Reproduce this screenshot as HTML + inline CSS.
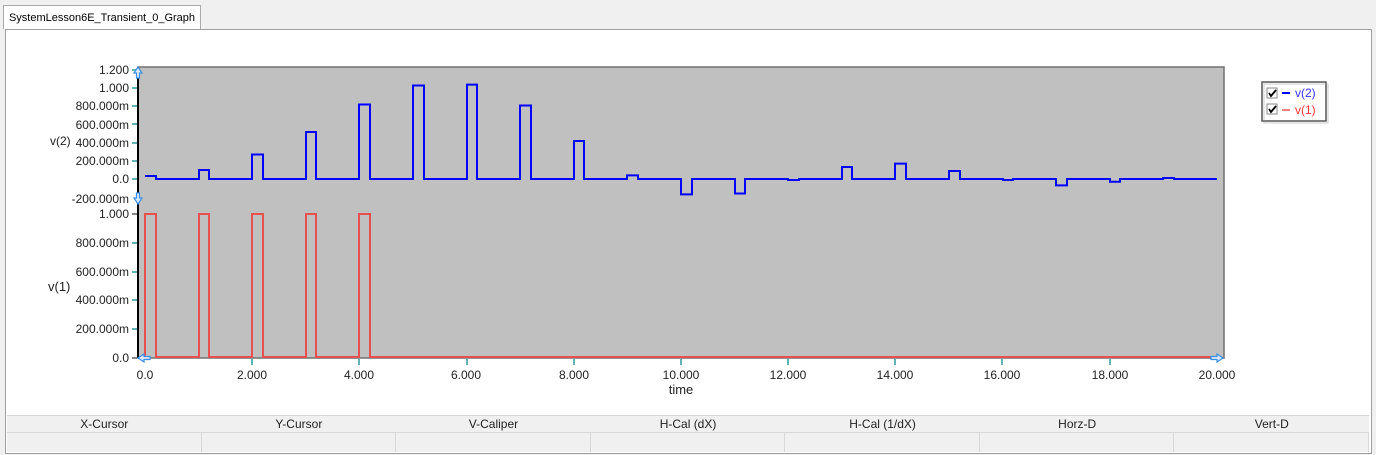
<!DOCTYPE html>
<html><head><meta charset="utf-8"><style>
body{margin:0;width:1376px;height:455px;background:#f0f0f0;font-family:"Liberation Sans",sans-serif;overflow:hidden;position:relative}
.tab{position:absolute;left:3px;top:5px;width:196px;height:23px;background:#fff;border:1px solid #aaa;border-bottom:none;font-size:11px;line-height:24px;text-align:center;color:#000;white-space:nowrap}
.panel{position:absolute;left:5px;top:29px;width:1365px;height:423px;background:#fff;border:1px solid #a0a0a0}
.tbl{position:absolute;left:7px;top:415px;width:1362px;background:#f0f0f0}
.row{display:flex;height:16px;font-size:12px;line-height:16px;border-top:1px solid #d8d8d8}
.row div{flex:1;text-align:center;color:#222}
.row2{display:flex;height:19px;border-top:1px solid #d8d8d8}
.row2 div{flex:1;border-right:1px solid #d8d8d8}
</style></head><body>
<div class="tab">SystemLesson6E_Transient_0_Graph</div>
<div class="panel"></div>
<svg style="position:absolute;left:0;top:0" width="1376" height="455" font-family="Liberation Sans, sans-serif" font-size="12">
<rect x="138" y="67" width="1086" height="291" fill="#c0c0c0" stroke="#707070" stroke-width="1.5"/>
<line x1="138" y1="67" x2="138" y2="358" stroke="#000" stroke-width="2"/>
<g stroke="#5fb3b3" stroke-width="2">
<line x1="132" y1="70" x2="137" y2="70"/><line x1="132" y1="88" x2="137" y2="88"/><line x1="132" y1="106" x2="137" y2="106"/><line x1="132" y1="124" x2="137" y2="124"/><line x1="132" y1="143" x2="137" y2="143"/><line x1="132" y1="161" x2="137" y2="161"/><line x1="132" y1="179" x2="137" y2="179"/>
<line x1="132" y1="243" x2="137" y2="243"/><line x1="132" y1="272" x2="137" y2="272"/><line x1="132" y1="300" x2="137" y2="300"/><line x1="132" y1="329" x2="137" y2="329"/>
<line x1="252" y1="359" x2="252" y2="365"/><line x1="359" y1="359" x2="359" y2="365"/><line x1="467" y1="359" x2="467" y2="365"/><line x1="574" y1="359" x2="574" y2="365"/><line x1="681" y1="359" x2="681" y2="365"/><line x1="788" y1="359" x2="788" y2="365"/><line x1="895" y1="359" x2="895" y2="365"/><line x1="1002" y1="359" x2="1002" y2="365"/><line x1="1110" y1="359" x2="1110" y2="365"/>
</g>
<g stroke="#888" stroke-width="2"><line x1="132" y1="214" x2="137" y2="214"/><line x1="132" y1="358" x2="137" y2="358"/></g>
<g fill="#222" text-anchor="end">
<text x="129" y="74">1.200</text><text x="129" y="92">1.000</text><text x="129" y="110">800.000m</text><text x="129" y="129">600.000m</text><text x="129" y="147">400.000m</text><text x="129" y="165">200.000m</text><text x="129" y="183">0.0</text><text x="129" y="203">-200.000m</text>
<text x="129" y="218">1.000</text><text x="129" y="247">800.000m</text><text x="129" y="276">600.000m</text><text x="129" y="304">400.000m</text><text x="129" y="333">200.000m</text><text x="129" y="362">0.0</text>
</g>
<text x="50" y="145" fill="#222">v(2)</text>
<text x="48" y="291" fill="#222" font-size="13">v(1)</text>
<g fill="#222" text-anchor="middle">
<text x="145" y="379">0.0</text><text x="252" y="379">2.000</text><text x="359" y="379">4.000</text><text x="466" y="379">6.000</text><text x="574" y="379">8.000</text><text x="681" y="379">10.000</text><text x="788" y="379">12.000</text><text x="895" y="379">14.000</text><text x="1002" y="379">16.000</text><text x="1110" y="379">18.000</text><text x="1217" y="379">20.000</text>
<text x="681" y="394" font-size="13">time</text>
</g>
<path fill="none" stroke="#e85050" stroke-width="2" d="M145,357 V214 H156 V357 H199 V214 H209 V357 H252 V214 H263 V357 H306 V214 H316 V357 H359 V214 H370 V357 H1217"/>
<path fill="none" stroke="#0000ff" stroke-width="2" d="M145,176 H156 V179 H199 V170 H209 V179 H252 V154.5 H263 V179 H306 V132 H316 V179 H359 V104.5 H370 V179 H413 V85.5 H424 V179 H467 V84.6 H477 V179 H520 V105.5 H531 V179 H574 V141 H584 V179 H627 V175.4 H638 V179 H681 V194.4 H692 V179 H735 V193.5 H745 V179 H788 V180 H799 V179 H842 V167 H852 V179 H895 V163.6 H906 V179 H949 V171 H960 V179 H1003 V180 H1013 V179 H1056 V185.4 H1067 V179 H1110 V181.7 H1120 V179 H1163 V178 H1174 V179 H1217"/>
<g fill="#dcecff" stroke="#3a8ee6" stroke-width="1.2">
<path d="M138,67 l-4,6 h2.5 v5 h3 v-5 h2.5 z"/>
<path d="M138,204 l-4,-6 h2.5 v-5 h3 v5 h2.5 z"/>
<path d="M138,358 l6,-4 v2.5 h6 v3 h-6 v2.5 z"/>
<path d="M1223,358 l-6,-4 v2.5 h-6 v3 h6 v2.5 z"/>
</g>
<rect x="1262" y="82" width="64" height="39" fill="#fff" stroke="#555" stroke-width="1.5"/>
<rect x="1264" y="84" width="64" height="39" fill="none" stroke="#999" stroke-width="1" opacity="0.5"/>
<rect x="1267" y="88" width="10" height="10" fill="#fff" stroke="#888"/>
<rect x="1267" y="104" width="10" height="10" fill="#fff" stroke="#888"/>
<path d="M1269,93 l2,3 l5,-6" stroke="#000" stroke-width="1.8" fill="none"/>
<path d="M1269,109 l2,3 l5,-6" stroke="#000" stroke-width="1.8" fill="none"/>
<line x1="1282" y1="93" x2="1290" y2="93" stroke="#0000ff" stroke-width="2"/>
<line x1="1282" y1="110" x2="1290" y2="110" stroke="#f08080" stroke-width="2"/>
<text x="1295" y="97" fill="#3333ff" font-size="12">v(2)</text>
<text x="1295" y="114" fill="#ff3333" font-size="12">v(1)</text>
</svg>
<div class="tbl">
<div class="row"><div>X-Cursor</div><div>Y-Cursor</div><div>V-Caliper</div><div>H-Cal (dX)</div><div>H-Cal (1/dX)</div><div>Horz-D</div><div>Vert-D</div></div>
<div class="row2"><div></div><div></div><div></div><div></div><div></div><div></div><div></div></div>
</div>
</body></html>
